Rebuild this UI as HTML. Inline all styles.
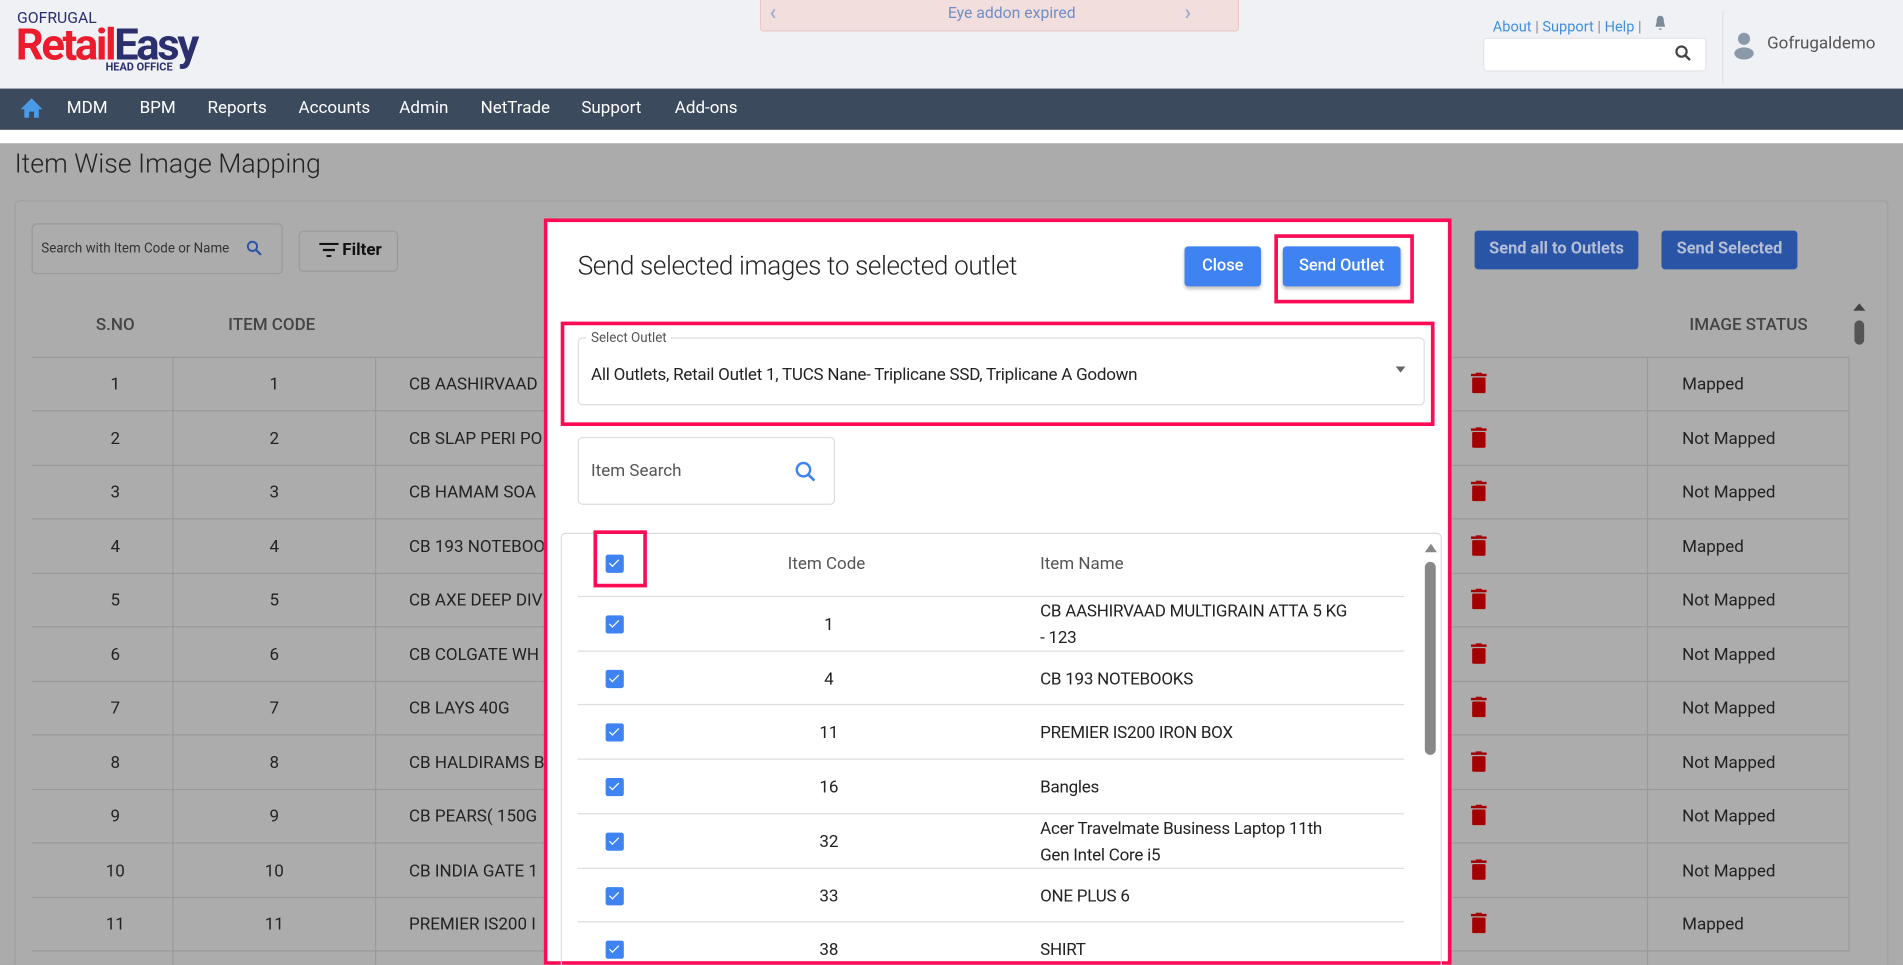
<!DOCTYPE html>
<html><head><meta charset="utf-8"><style>
html,body{margin:0;padding:0;width:1903px;height:965px;overflow:hidden;background:#ababab}
#w{position:absolute;left:0;top:0;width:1568px;height:795px;transform:scale(1.21365);transform-origin:0 0;font-family:"Roboto","Liberation Sans",sans-serif;overflow:hidden;background:#ababab}
.a{position:absolute}
.nav span{position:absolute;top:81px;color:#fff;font-size:14px}
.cb{position:absolute;width:15px;height:15px;background:#3f82f2;border-radius:2px}
.cb:after{content:"";position:absolute;left:5px;top:2px;width:3px;height:7px;border:solid #fff;border-width:0 1.5px 1.5px 0;transform:rotate(45deg)}
.bt{position:absolute;color:#222;font-size:14px}
</style></head><body><div id="w">
<div class="a" style="left:0;top:0;width:1568px;height:73px;background:#f0f1f5"></div>
<div class="a" style="left:14px;top:8px;font-size:13px;color:#2b2f6e;letter-spacing:0px">GOFRUGAL</div>
<div class="a" style="left:13px;top:17px;font-size:36px;font-weight:bold;letter-spacing:-2px;line-height:40px"><span style="color:#ec1c2d">Retail</span><span style="color:#2b2f6e">Easy</span></div>
<div class="a" style="left:87px;top:51px;font-size:9px;font-weight:bold;color:#2b2f6e">HEAD OFFICE</div>
<div class="a" style="left:626px;top:0;width:393px;height:25px;background:#f3dede;border:1px solid #e8c8c8;border-top:0;border-radius:0 0 3px 3px"></div>
<div class="a" style="left:634px;top:0px;color:#9cb0d0;font-size:18px;font-weight:bold">‹</div>
<div class="a" style="left:976px;top:0px;color:#9cb0d0;font-size:18px;font-weight:bold">›</div>
<div class="a" style="left:781px;top:4px;color:#6f8fc8;font-size:13px">Eye addon expired</div>
<div class="a" style="left:1230px;top:15px;font-size:12px;color:#3f8fe0">About <span style="color:#888">|</span> Support <span style="color:#888">|</span> Help <span style="color:#888">|</span></div>
<svg class="a" style="left:1362px;top:12px" width="12" height="14" viewBox="0 0 12 14"><path d="M6 1C3.5 1 3 3.5 3 6L2 10H10L9 6C9 3.5 8.5 1 6 1Z M4.5 11.5H7.5L6 13Z" fill="#7a8a9a"/></svg>
<div class="a" style="left:1222px;top:31px;width:182px;height:26px;background:#fff;border:1px solid #e3e5ea;border-radius:3px"></div>
<svg class="a" style="left:1380px;top:37px" width="14" height="14"><circle cx="5.5" cy="5.5" r="4.2" fill="none" stroke="#444" stroke-width="1.8"/><path d="M8.5 8.5L12.5 12.5" stroke="#444" stroke-width="2"/></svg>
<div class="a" style="left:1419px;top:8px;width:1px;height:62px;background:#e2e3e7"></div>
<svg class="a" style="left:1427px;top:25px" width="20" height="24"><circle cx="10" cy="7" r="5" fill="#8a9aab"/><ellipse cx="10" cy="19" rx="8" ry="5" fill="#8a9aab"/></svg>
<div class="a" style="left:1456px;top:28px;font-size:14px;color:#555">Gofrugaldemo</div>
<div class="a nav" style="left:0;top:73px;width:1568px;height:34px;background:#3c4a5e">
<svg class="a" style="left:16px;top:7px" width="20" height="18"><path d="M10 1L1 10H4V17H8V12H12V17H16V10H19Z" fill="#4a9ae8"/></svg></div>
<div class="nav"><span style="left:55px">MDM</span><span style="left:115px">BPM</span><span style="left:171px">Reports</span><span style="left:246px">Accounts</span><span style="left:329px">Admin</span><span style="left:396px">NetTrade</span><span style="left:479px">Support</span><span style="left:556px">Add-ons</span></div>
<div class="a" style="left:0;top:107px;width:1568px;height:11px;background:#fff"></div>
<div class="a" style="left:12px;top:123px;font-size:22px;font-weight:300;color:#222">Item Wise Image Mapping</div>
<div class="a" style="left:12px;top:165px;width:1542px;height:640px;border:1px solid #a0a0a0;border-radius:4px;background:#acacac"></div>
<div class="a" style="left:26px;top:184px;width:205px;height:40px;border:1px solid #999;border-radius:4px"></div>
<div class="a" style="left:34px;top:198px;font-size:11px;color:#333">Search with Item Code or Name</div>
<svg class="a" style="left:203px;top:198px" width="13" height="13"><circle cx="5" cy="5" r="3.8" fill="none" stroke="#2a54a6" stroke-width="1.6"/><path d="M8 8L12 12" stroke="#2a54a6" stroke-width="1.8"/></svg>
<div class="a" style="left:246px;top:190px;width:80px;height:32px;border:1px solid #999;border-radius:4px"></div>
<svg class="a" style="left:263px;top:200px" width="16" height="12"><path d="M0 1H16M3 6H13M6 11H10" stroke="#111" stroke-width="1.8"/></svg>
<div class="a" style="left:282px;top:198px;font-size:14px;color:#111;font-weight:bold">Filter</div>
<div class="a" style="left:1215px;top:190px;width:135px;height:32px;background:#2a54a6;border-radius:3px;color:#b4bfd4;font-size:13.5px;text-align:center;line-height:31px;font-weight:bold">Send all to Outlets</div>
<div class="a" style="left:1369px;top:190px;width:112px;height:32px;background:#2a54a6;border-radius:3px;color:#b4bfd4;font-size:13.5px;text-align:center;line-height:31px;font-weight:bold">Send Selected</div>
<div class="a" style="left:79px;top:260px;font-size:14px;color:#444;font-weight:500">S.NO</div>
<div class="a" style="left:188px;top:260px;font-size:14px;color:#444;font-weight:500">ITEM CODE</div>
<div class="a" style="left:1392px;top:260px;font-size:14px;color:#444;font-weight:500">IMAGE STATUS</div>
<div class="a" style="left:1527px;top:250px;width:0;height:0;border:5px solid transparent;border-bottom:6px solid #444;border-top:0"></div>
<div class="a" style="left:1528px;top:264px;width:8px;height:20px;background:#555;border-radius:4px"></div>
<div class="a" style="left:26px;top:294px;width:1497px;height:1px;background:#999"></div>
<div class="a" style="left:142px;top:294px;width:1px;height:510px;background:#999"></div>
<div class="a" style="left:309px;top:294px;width:1px;height:510px;background:#999"></div>
<div class="a" style="left:1357px;top:294px;width:1px;height:510px;background:#999"></div>
<div class="a" style="left:1523px;top:294px;width:1px;height:490px;background:#999"></div>
<div id="rows"></div>
<div class="a" style="left:448px;top:180px;width:742px;height:609px;border:3px solid #ff0a54;background:#fff"></div>
<div class="a" style="left:476px;top:207px;font-size:21.5px;font-weight:300;color:#222;letter-spacing:-0.3px">Send selected images to selected outlet</div>
<div class="a" style="left:976px;top:203px;width:63px;height:33px;background:#3f82f2;border-radius:3px;color:#fff;font-size:13.5px;text-align:center;line-height:32px;font-weight:500;box-shadow:0 2px 3px rgba(0,0,0,.25)">Close</div>
<div class="a" style="left:1050px;top:193px;width:109px;height:51px;border:3px solid #ff0a54"></div>
<div class="a" style="left:1057px;top:203px;width:97px;height:33px;background:#3f82f2;border-radius:3px;color:#fff;font-size:13.5px;text-align:center;line-height:32px;font-weight:500;box-shadow:0 2px 3px rgba(0,0,0,.25)">Send Outlet</div>
<div class="a" style="left:462px;top:265px;width:714px;height:80px;border:3px solid #ff0a54"></div>
<div class="a" style="left:476px;top:278px;width:696px;height:54px;border:1px solid #ddd;border-radius:4px"></div>
<div class="a" style="left:483px;top:272px;font-size:11px;color:#555;background:#fff;padding:0 4px">Select Outlet</div>
<div class="a" style="left:487px;top:301px;font-size:14px;color:#222;letter-spacing:-0.2px">All Outlets, Retail Outlet 1, TUCS Nane- Triplicane SSD, Triplicane A Godown</div>
<div class="a" style="left:1150px;top:302px;width:0;height:0;border:4px solid transparent;border-top:5px solid #666;border-bottom:0"></div>
<div class="a" style="left:476px;top:360px;width:210px;height:54px;border:1px solid #ddd;border-radius:4px"></div>
<div class="a" style="left:487px;top:380px;font-size:14px;color:#555">Item Search</div>
<svg class="a" style="left:655px;top:380px" width="18" height="18"><circle cx="7" cy="7" r="5.5" fill="none" stroke="#3f82f2" stroke-width="2"/><path d="M11 11L16 16" stroke="#3f82f2" stroke-width="2.2"/></svg>
<div class="a" style="left:462px;top:439px;width:724px;height:360px;border:1px solid #ddd;border-radius:4px"></div>
<div class="a" style="left:489px;top:437px;width:38px;height:41px;border:3px solid #ff0a54"></div>
<div class="cb" style="left:499px;top:457px"></div>
<div class="a" style="left:649px;top:457px;font-size:14px;color:#555">Item Code</div>
<div class="a" style="left:857px;top:457px;font-size:14px;color:#555">Item Name</div>
<div class="a" style="left:1174px;top:448px;width:0;height:0;border:5px solid transparent;border-bottom:7px solid #888;border-top:0"></div>
<div class="a" style="left:1174px;top:463px;width:9px;height:159px;background:#888;border-radius:5px"></div>
<div id="mrows"></div>
</div>
<script>
var r=[["1","1","CB AASHIRVAAD","Mapped"],["2","2","CB SLAP PERI PO","Not Mapped"],["3","3","CB HAMAM SOA","Not Mapped"],["4","4","CB 193 NOTEBOO","Mapped"],["5","5","CB AXE DEEP DIV","Not Mapped"],["6","6","CB COLGATE WH","Not Mapped"],["7","7","CB LAYS 40G","Not Mapped"],["8","8","CB HALDIRAMS B","Not Mapped"],["9","9","CB PEARS( 150G","Not Mapped"],["10","10","CB INDIA GATE 1","Not Mapped"],["11","11","PREMIER IS200 I","Mapped"]];
var h="";r.forEach(function(x,i){var c=316+i*44.5;
h+='<div class="a" style="left:26px;top:'+(c+22)+'px;width:1497px;height:1px;background:#999"></div>';
h+='<div class="bt" style="left:62px;width:66px;text-align:center;top:'+(c-7)+'px">'+x[0]+'</div>';
h+='<div class="bt" style="left:193px;width:66px;text-align:center;top:'+(c-7)+'px">'+x[1]+'</div>';
h+='<div class="bt" style="left:337px;top:'+(c-7)+'px">'+x[2]+'</div>';
h+='<svg class="a" style="left:1212px;top:'+(c-9)+'px" width="13" height="17"><rect x="0" y="1" width="13" height="2" fill="#a50000"/><rect x="4" y="0" width="5" height="2" fill="#a50000"/><rect x="1" y="4" width="11" height="13" rx="1" fill="#a50000"/></svg>';
h+='<div class="bt" style="left:1386px;top:'+(c-7)+'px">'+x[3]+'</div>';});
document.getElementById("rows").innerHTML=h;
var m=[["1","CB AASHIRVAAD MULTIGRAIN ATTA 5 KG<br>- 123"],["4","CB 193 NOTEBOOKS"],["11","PREMIER IS200 IRON BOX"],["16","Bangles"],["32","Acer Travelmate Business Laptop 11th<br>Gen Intel Core i5"],["33","ONE PLUS 6"],["38","SHIRT"]];
var g="";m.forEach(function(x,i){var c=514+i*44.7;
g+='<div class="a" style="left:476px;top:'+(c-23)+'px;width:681px;height:1px;background:#ddd"></div>';
g+='<div class="cb" style="left:499px;top:'+(c-7)+'px"></div>';
g+='<div class="bt" style="left:643px;width:80px;text-align:center;top:'+(c-7)+'px">'+x[0]+'</div>';
var two=x[1].indexOf("<br>")>0;
g+='<div class="bt" style="left:857px;line-height:22px;letter-spacing:-0.2px;top:'+(c-(two?21:10))+'px">'+x[1]+'</div>';});
document.getElementById("mrows").innerHTML=g;
</script>
</body></html>
